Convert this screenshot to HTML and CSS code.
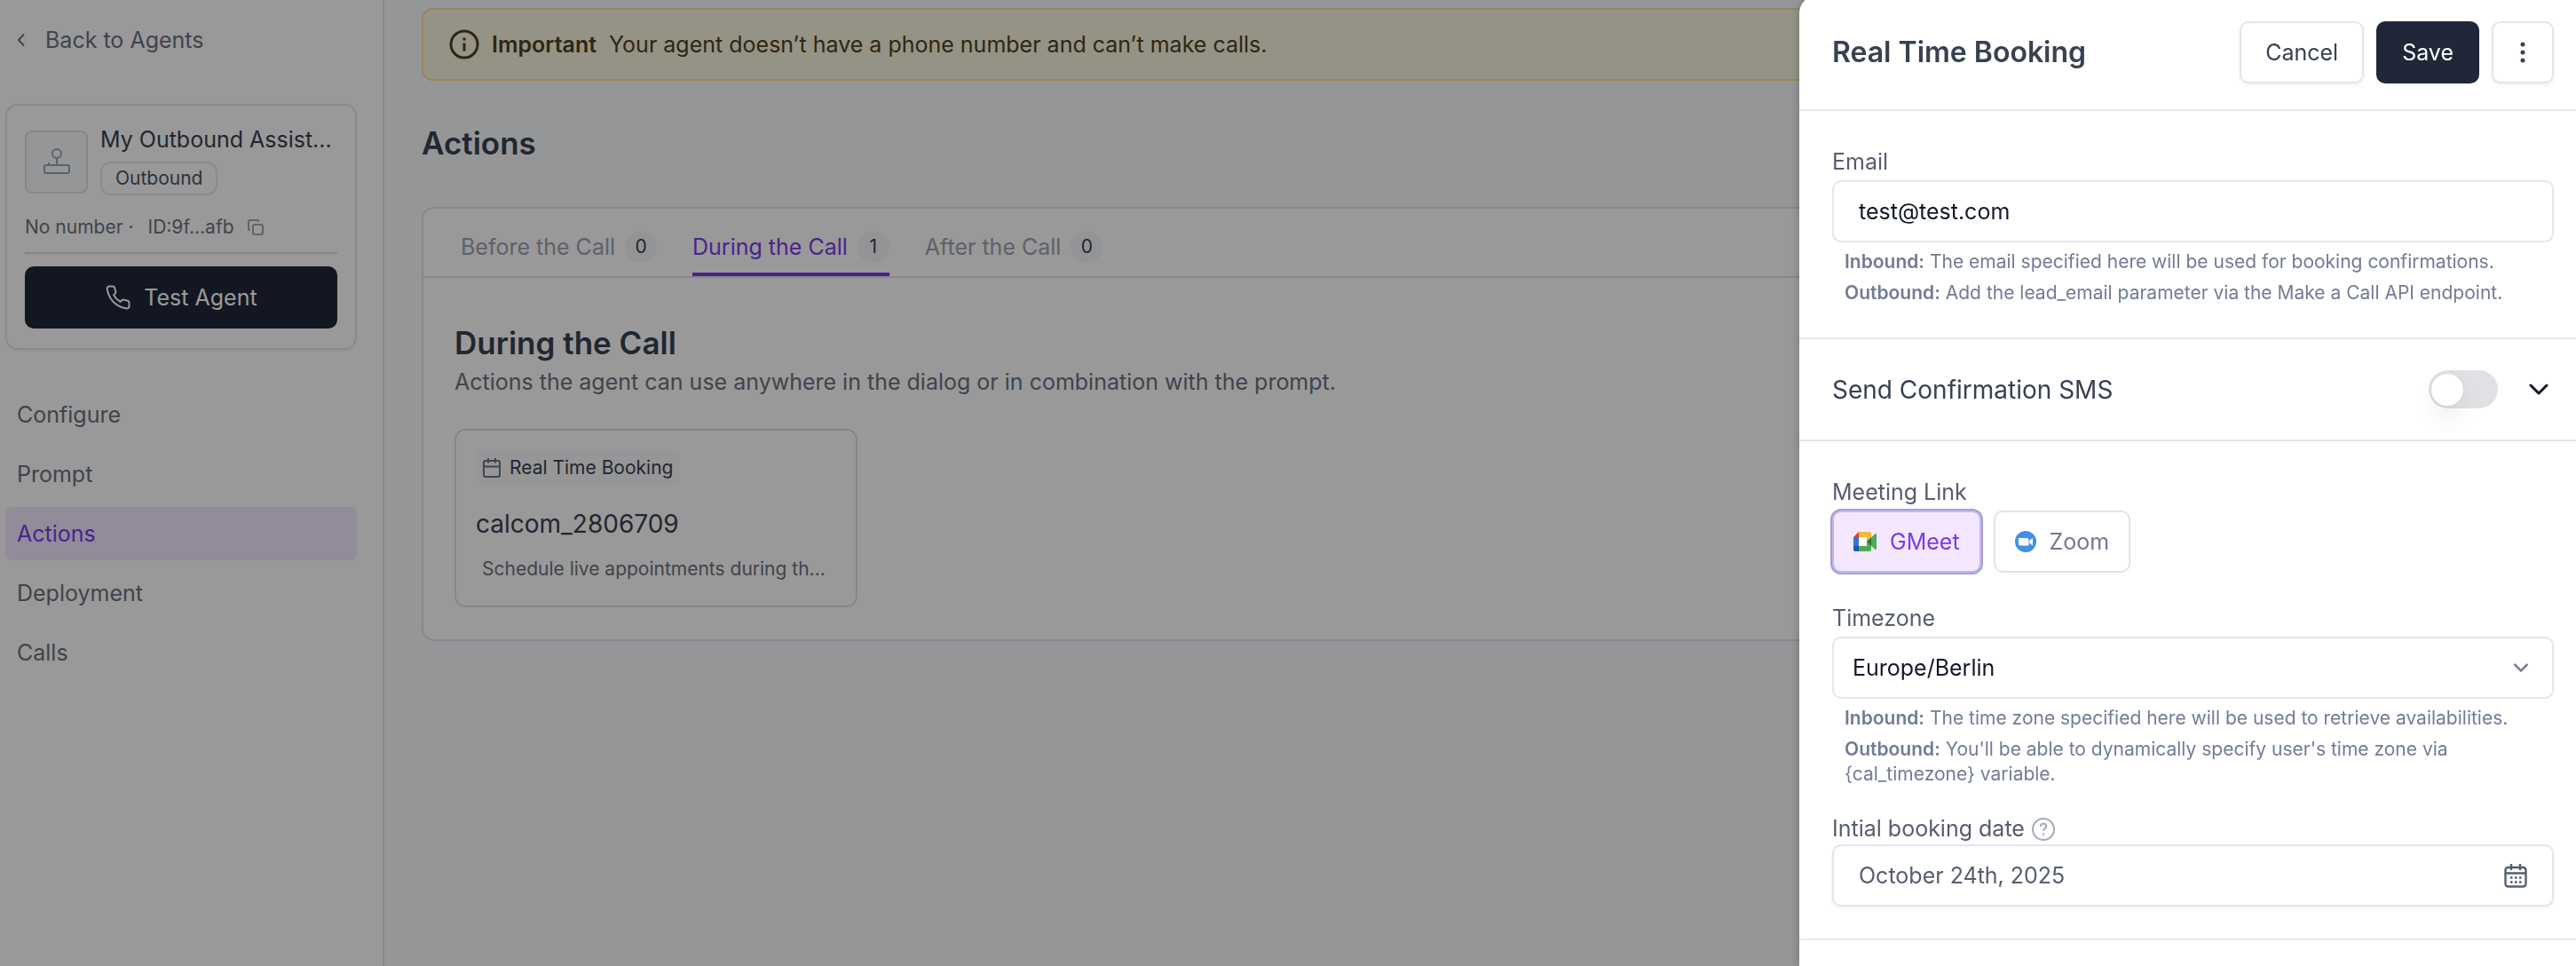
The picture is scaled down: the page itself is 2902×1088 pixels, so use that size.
FILE: index.html
```
<!DOCTYPE html>
<html lang="en">
<head>
  <meta charset="UTF-8">
  <meta name="viewport" content="width=device-width, initial-scale=1.0">
  <title>Actions - My Outbound Assistant</title>
  <link rel="stylesheet" href="styles.css">
</head>
<body>
  <div class="layout">
    <aside class="sidebar">
      <a href="#" class="back-link">
        <svg class="back-icon" viewBox="0 0 10 16" fill="none" stroke="currentColor" stroke-width="2"><path d="M8 1.5 2 8l6 6.5"/></svg>
        Back to Agents
      </a>

      <div class="agent-card">
        <div class="agent-top">
          <div class="agent-avatar">
            <svg width="32" height="32" viewBox="0 0 32 32" fill="none" stroke="currentColor" stroke-width="2">
              <circle cx="16" cy="7" r="5"/>
              <path d="M16 12v8M7 20v-3"/>
              <rect x="2" y="20" width="28" height="9" rx="2"/>
            </svg>
          </div>
          <div class="agent-info">
            <div class="agent-name">My Outbound Assist...</div>
            <span class="agent-type">Outbound</span>
          </div>
        </div>
        <div class="agent-meta">
          <span>No number ·</span>
          <span class="agent-id">ID:9f...afb</span>
          <button type="button" class="copy-btn" aria-label="Copy ID">
            <svg width="18" height="18" viewBox="0 0 18 18" fill="none" stroke="currentColor" stroke-width="2"><rect x="6" y="6" width="11" height="11" rx="2"/><path d="M3 12H2a1 1 0 0 1-1-1V3a2 2 0 0 1 2-2h8a1 1 0 0 1 1 1v1"/></svg>
          </button>
        </div>
        <button type="button" class="btn btn-dark btn-block">
          <svg width="30" height="30" viewBox="0 0 24 24" fill="none" stroke="currentColor" stroke-width="1.6" stroke-linejoin="round"><path d="M22 16.92v3a2 2 0 0 1-2.18 2 19.79 19.79 0 0 1-8.63-3.07 19.5 19.5 0 0 1-6-6 19.79 19.79 0 0 1-3.07-8.67A2 2 0 0 1 4.11 2h3a2 2 0 0 1 2 1.72 12.84 12.84 0 0 0 .7 2.81 2 2 0 0 1-.45 2.11L8.09 9.91a16 16 0 0 0 6 6l1.27-1.27a2 2 0 0 1 2.11-.45 12.84 12.84 0 0 0 2.81.7A2 2 0 0 1 22 16.92z"/></svg>
          Test Agent
        </button>
      </div>

      <nav class="side-nav">
        <a href="#">Configure</a>
        <a href="#">Prompt</a>
        <a href="#" class="active">Actions</a>
        <a href="#">Deployment</a>
        <a href="#">Calls</a>
      </nav>
    </aside>

    <main class="main">
      <div class="alert">
        <svg width="34" height="34" viewBox="0 0 34 34" fill="none" stroke="currentColor" stroke-width="3"><circle cx="17" cy="17" r="15"/><path d="M17 15.5v9M17 9.5v3"/></svg>
        <strong>Important</strong>
        <span>Your agent doesn’t have a phone number and can’t make calls.</span>
      </div>

      <h1>Actions</h1>

      <section class="panel">
        <div class="tabs" role="tablist">
          <button type="button" class="tab" role="tab">Before the Call <span class="count">0</span></button>
          <button type="button" class="tab active" role="tab" aria-selected="true">During the Call <span class="count">1</span></button>
          <button type="button" class="tab" role="tab">After the Call <span class="count">0</span></button>
        </div>
        <div class="panel-body">
          <h2>During the Call</h2>
          <p class="subtitle">Actions the agent can use anywhere in the dialog or in combination with the prompt.</p>
          <div class="action-card">
            <span class="action-type">
              <svg width="20" height="22" viewBox="0 0 20 22" fill="none" stroke="currentColor" stroke-width="2"><rect x="1" y="3" width="18" height="18" rx="2"/><path d="M1 9.500h18M6 0v5.500M14 0v5.500"/></svg>
              Real Time Booking
            </span>
            <h3>calcom_2806709</h3>
            <p>Schedule live appointments during th...</p>
          </div>
        </div>
      </section>
    </main>
  </div>

  <div class="overlay"></div>

  <div class="drawer" role="dialog" aria-labelledby="drawerTitle">
    <header class="drawer-header">
      <h2 id="drawerTitle">Real Time Booking</h2>
      <button type="button" class="btn btn-light">Cancel</button>
      <button type="submit" form="bookingForm" class="btn btn-dark">Save</button>
      <button type="button" class="btn btn-light btn-icon" aria-label="More">
        <svg width="6" height="24" viewBox="0 0 6 24" fill="currentColor"><circle cx="3" cy="3" r="2.500"/><circle cx="3" cy="12" r="2.500"/><circle cx="3" cy="21" r="2.500"/></svg>
      </button>
    </header>

    <form id="bookingForm">
      <div class="section">
        <div class="form-group">
          <label for="email">Email</label>
          <input type="email" id="email" name="email" class="control" value="test@test.com">
          <div class="help">
            <p><b>Inbound:</b> The email specified here will be used for booking confirmations.</p>
            <p><b>Outbound:</b> Add the lead_email parameter via the Make a Call API endpoint.</p>
          </div>
        </div>
      </div>

      <div class="section sms-row">
        <label for="sms">Send Confirmation SMS</label>
        <input type="checkbox" id="sms" name="sms" class="switch">
        <button type="button" class="expand-btn" aria-label="Expand">
          <svg width="22" height="14" viewBox="0 0 22 14" fill="none" stroke="currentColor" stroke-width="3" stroke-linecap="round" stroke-linejoin="round"><path d="m2 2 9 9 9-9"/></svg>
        </button>
      </div>

      <div class="section">
        <div class="form-group" role="group" aria-labelledby="meetingLabel">
          <div class="label" id="meetingLabel">Meeting Link</div>
          <div class="options">
            <button type="button" class="option selected" aria-pressed="true">
              <svg width="26" height="22" viewBox="0 0 26 22">
                <path d="M0 6 6 0v6z" fill="#d8433b"/>
                <path d="M0 6h6v10H0z" fill="#3273dc"/>
                <path d="M0 16h6v6H2a2 2 0 0 1-2-2z" fill="#2158b8"/>
                <path d="M6 0h12a2 2 0 0 1 2 2v5l-5 4V6H6z" fill="#f3b83c"/>
                <path d="M6 16h9v-5l5 4v5a2 2 0 0 1-2 2H6z" fill="#4fa955"/>
                <path d="M15 11 24.500 2.200c.6-.5 1.500-.1 1.500.6v16.400c0 .7-.9 1.100-1.500.6z" fill="#4fa955"/>
                <path d="M15 11 20 6.400v9.200z" fill="#317537"/>
                <path d="M6 6h9v10H6z" fill="#fff"/>
              </svg>
              GMeet
            </button>
            <button type="button" class="option" aria-pressed="false">
              <svg width="24" height="24" viewBox="0 0 24 24">
                <circle cx="12" cy="12" r="12" fill="#4190e8"/>
                <path d="M4 8h9.500a2 2 0 0 1 2 2v6.500H6a2 2 0 0 1-2-2z" fill="#fff"/>
                <path d="M16.300 10.800 20 8v8.500l-3.700-2.700z" fill="#fff"/>
              </svg>
              Zoom
            </button>
          </div>
        </div>

        <div class="form-group">
          <label for="timezone">Timezone</label>
          <div class="select-wrap">
            <select id="timezone" name="timezone" class="control">
              <option>Europe/Berlin</option>
            </select>
            <svg class="select-icon" width="18" height="12" viewBox="0 0 18 12" fill="none" stroke="currentColor" stroke-width="2.500"><path d="m1.500 2 7.500 7.500L16.500 2"/></svg>
          </div>
          <div class="help">
            <p><b>Inbound:</b> The time zone specified here will be used to retrieve availabilities.</p>
            <p><b>Outbound:</b> You'll be able to dynamically specify user's time zone via {cal_timezone} variable.</p>
          </div>
        </div>

        <div class="form-group">
          <label for="bookingDate" class="label-hint">
            Intial booking date
            <svg width="26" height="26" viewBox="0 0 26 26" fill="none" stroke="currentColor" stroke-width="2"><circle cx="13" cy="13" r="12"/><path d="M9.800 10c0-2 1.400-3.200 3.300-3.200s3.200 1.200 3.200 2.900c0 2.300-3.200 2.600-3.200 5"/><path d="M13 17.500v2.200"/></svg>
          </label>
          <button type="button" id="bookingDate" class="control date-btn">
            October 24th, 2025
            <svg width="26" height="27" viewBox="0 0 26 27" fill="none" stroke="currentColor" stroke-width="2.400"><rect x="1.500" y="4" width="23" height="21.500" rx="3"/><path d="M1.500 10.500h23M8 0v7M18 0v7"/><path d="M7 15.500h2.500M12 15.500h2.500M17 15.500h2.500M7 20.500h2.500M12 20.500h2.500M17 20.500h2.500"/></svg>
          </button>
        </div>
      </div>
    </form>
  </div>
</body>
</html>
```
FILE: styles.css
```
* {
  box-sizing: border-box;
}
body {
  font-family: Inter, "Liberation Sans", sans-serif;
  font-size: 25px;
  line-height: 36px;
  margin: 0;
  color: #374151;
  background-color: #f8fafc;
  overflow: hidden;
}
h1, h2, h3, p {
  margin: 0;
}
a {
  text-decoration: none;
}
button, input, select {
  font-family: inherit;
  font-size: 25px;
  line-height: 36px;
}
button {
  cursor: pointer;
}
svg {
  flex-shrink: 0;
}
.layout {
  display: flex;
  min-height: 100vh;
}

/* Sidebar */
.sidebar {
  width: 433px;
  flex-shrink: 0;
  padding: 27px 29px 27px 6px;
  background-color: #fff;
  border-right: 2px solid #e0e2e5;
}
.back-link {
  display: flex;
  align-items: center;
  gap: 22px;
  padding-left: 13px;
  margin-bottom: 54px;
  color: #6b7280;
}
.back-icon {
  width: 10px;
  height: 16px;
}
.agent-card {
  padding: 20px 20px 22px;
  border: 2px solid #e5e7eb;
  border-radius: 14px;
  box-shadow: 0 1px 3px rgba(0,0,0,0.06);
}
.agent-top {
  display: flex;
  align-items: center;
  gap: 14px;
}
.agent-avatar {
  display: flex;
  align-items: center;
  justify-content: center;
  width: 71px;
  height: 71px;
  flex-shrink: 0;
  border: 2px solid #dcdfe3;
  border-radius: 8px;
  background-color: #f8fafc;
  color: #9ca3af;
}
.agent-info {
  padding-bottom: 5px;
}
.agent-name {
  white-space: nowrap;
  margin-bottom: 7px;
}
.agent-type {
  display: block;
  width: fit-content;
  padding: 3px 15px;
  border: 2px solid #e5e7eb;
  border-radius: 12px;
  font-size: 21px;
  line-height: 28px;
  color: #4b5563;
}
.agent-meta {
  display: flex;
  align-items: center;
  margin: 17px 0 14px;
  padding-bottom: 14px;
  border-bottom: 2px solid #dcdee1;
  font-size: 21px;
  line-height: 28px;
  color: #6b7280;
}
.agent-id {
  margin-left: 16px;
}
.copy-btn {
  display: flex;
  margin-left: 15px;
  padding: 0;
  border: none;
  background: none;
  color: #a3a7ae;
}
.side-nav {
  display: flex;
  flex-direction: column;
  gap: 7px;
  margin-top: 43px;
}
.side-nav a {
  padding: 12px 13px;
  border-radius: 8px;
  color: #6b7280;
}
.side-nav a.active {
  background-color: #f3e8ff;
  color: #7c3aed;
}

/* Buttons */
.btn {
  display: flex;
  align-items: center;
  justify-content: center;
  gap: 14px;
  height: 70px;
  padding: 0 27px;
  border: 2px solid #e4e5e8;
  border-radius: 10px;
}
.btn-dark {
  background-color: #1f2738;
  border-color: #1f2738;
  color: #fff;
}
.btn-light {
  background-color: #fff;
  color: #374151;
  box-shadow: 0 2px 4px rgba(0,0,0,0.06);
}
.btn-block {
  width: 100%;
}
.btn-icon {
  width: 70px;
  padding: 0;
}

/* Main content */
.main {
  flex: 1;
  padding: 9px 42px;
}
.alert {
  display: flex;
  align-items: center;
  gap: 14px;
  height: 82px;
  padding: 0 29px;
  border: 2px solid #fbdf9a;
  border-radius: 12px;
  background-color: #f9f5de;
  color: #4f4020;
}
.alert strong {
  font-weight: 600;
}
h1 {
  margin: 46px 0 48px;
  font-size: 35px;
  line-height: 48px;
  font-weight: 600;
}
.panel {
  border: 2px solid #dfe3e8;
  border-radius: 14px;
  background-color: #fff;
}
.tabs {
  display: flex;
  gap: 40px;
  padding: 14px 42px 0;
  border-bottom: 2px solid #dfe2e6;
}
.tab {
  display: flex;
  align-items: center;
  gap: 11px;
  height: 62px;
  padding: 0;
  border: none;
  border-bottom: 4px solid transparent;
  background: none;
  color: #9ca3af;
}
.tab.active {
  border-color: #7c3aed;
  color: #7c3aed;
}
.count {
  width: 36px;
  border-radius: 18px;
  background-color: #f4f7fa;
  color: #374151;
  font-size: 21px;
  text-align: center;
}
.panel-body {
  padding: 49px 35px 36px;
}
.panel-body h2 {
  margin-bottom: 2px;
  font-size: 35px;
  line-height: 48px;
  font-weight: 600;
}
.subtitle {
  color: #6b7280;
}
.action-card {
  width: 454px;
  margin-top: 35px;
  padding: 22px 22px 27px;
  border: 2px solid #dddfe2;
  border-radius: 12px;
}
.action-type {
  display: flex;
  align-items: center;
  gap: 10px;
  width: fit-content;
  height: 40px;
  padding: 0 8px;
  border-radius: 8px;
  background-color: #fafbfd;
  font-size: 21px;
}
.action-type svg {
  color: #6b7280;
}
.action-card h3 {
  margin: 23px 0 17px;
  font-size: 28px;
  line-height: 40px;
  font-weight: 400;
}
.action-card p {
  padding: 0 7px;
  font-size: 21px;
  line-height: 28px;
  color: #6b7280;
  white-space: nowrap;
}

/* Drawer */
.overlay {
  position: fixed;
  inset: 0;
  background-color: rgba(0,0,0,0.4);
}
.drawer {
  position: fixed;
  top: -5px;
  right: 0;
  bottom: 0;
  width: 100%;
  max-width: 875px;
  border-radius: 20px 0 0 0;
  background-color: #fff;
  box-shadow: 0 0 12px rgba(0,0,0,0.25);
  overflow: hidden;
}
.drawer-header {
  display: flex;
  align-items: center;
  gap: 14px;
  padding: 29px 25px 29px 37px;
  border-bottom: 2px solid #e5e7eb;
}
.drawer-header h2 {
  flex: 1;
  font-size: 32px;
  line-height: 40px;
  font-weight: 600;
}
.section {
  padding: 39px 25px 36px 37px;
  border-bottom: 2px solid #e5e7eb;
}
.form-group + .form-group {
  margin-top: 33px;
}
label, .label {
  display: block;
  margin-bottom: 3px;
  color: #565d6d;
}
.control {
  display: block;
  width: 100%;
  height: 70px;
  padding: 0 28px;
  border: 2px solid #e3e6ea;
  border-radius: 10px;
  background-color: #fff;
  color: #111827;
}
.help {
  padding: 8px 14px 0;
  font-size: 21px;
  line-height: 28px;
  color: #717c95;
}
.help p + p {
  margin-top: 7px;
}
.help b {
  font-weight: 600;
}
.sms-row {
  display: flex;
  align-items: center;
  height: 115px;
  padding-top: 0;
  padding-bottom: 0;
}
.sms-row label {
  flex: 1;
  margin: 0;
  font-size: 28px;
  color: #374151;
}
.switch {
  appearance: none;
  display: flex;
  align-items: center;
  width: 78px;
  height: 43px;
  margin: 0 35px 0 0;
  padding: 0 3px;
  border-radius: 22px;
  background-color: #e1e1e5;
}
.switch::before {
  content: "";
  width: 36px;
  height: 36px;
  border-radius: 50%;
  background-color: #fff;
  box-shadow: 0 18px 26px rgba(0,0,0,0.06), 0 0 4px rgba(0,0,0,0.06);
}
.expand-btn {
  display: flex;
  margin-right: 6px;
  padding: 0;
  border: none;
  background: none;
  color: #111827;
}
.options {
  display: flex;
  gap: 14px;
}
.option {
  display: flex;
  align-items: center;
  gap: 15px;
  height: 70px;
  padding: 0 22px;
  border: 2px solid #e2e3e6;
  border-radius: 10px;
  background-color: #fff;
  color: #717a8c;
}
.option.selected {
  border-color: #c8b3f3;
  background-color: #f3e8ff;
  color: #7c3aed;
  box-shadow: 0 0 0 2px #a3a3d3;
}
.select-wrap {
  display: grid;
  align-items: center;
}
.select-wrap > * {
  grid-area: 1 / 1;
}
.select-wrap .control {
  appearance: none;
  padding: 0 21px;
}
.select-icon {
  justify-self: end;
  margin-right: 28px;
  color: #7b8190;
  pointer-events: none;
}
.label-hint {
  display: flex;
  align-items: center;
  gap: 8px;
  line-height: 29px;
}
.label-hint svg {
  color: #a5abb6;
}
.date-btn {
  display: flex;
  align-items: center;
  justify-content: space-between;
  color: #565d6d;
  box-shadow: 0 2px 4px rgba(0,0,0,0.06);
}
```
